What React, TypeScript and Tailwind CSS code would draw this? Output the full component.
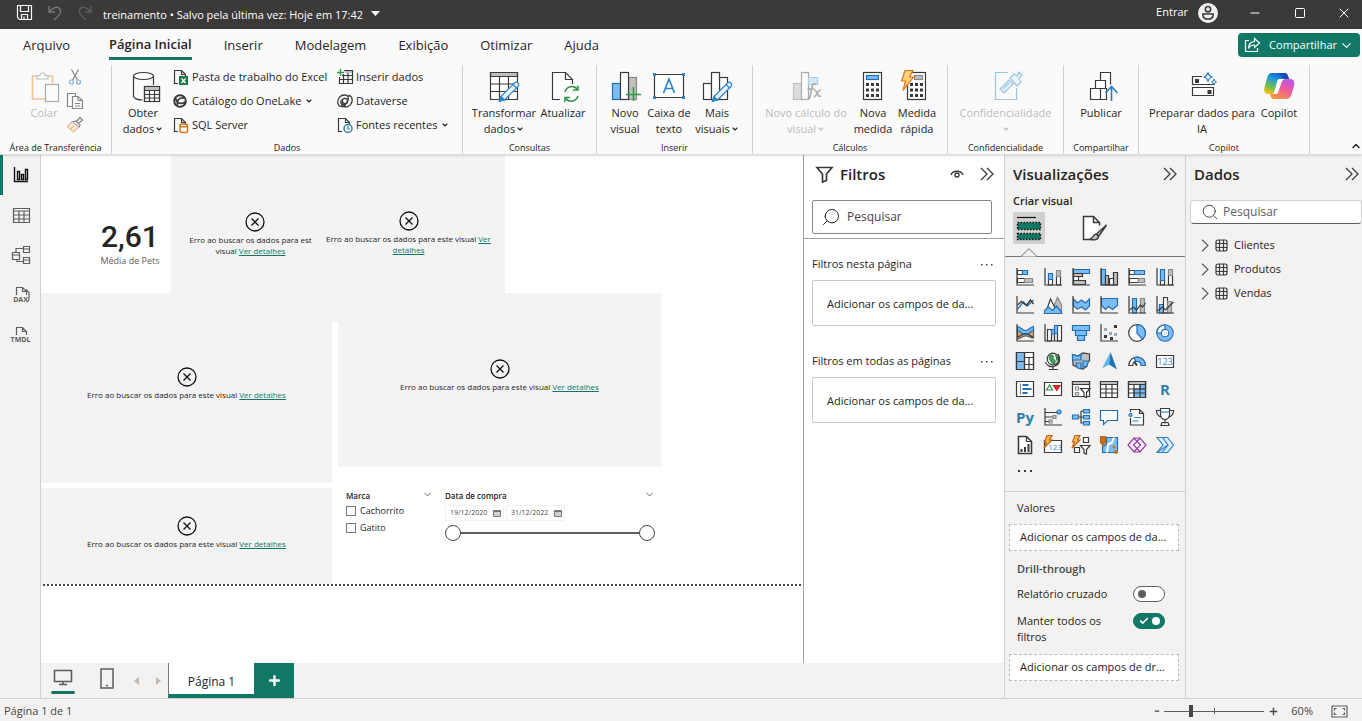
import { type ReactNode, useState } from "react";
import { Check, ChevronDown, ChevronUp, Minus, Plus, Search, Square, X } from "lucide-react";

const INK = "#3b3a39";
const BLUE = "#7cbcf2";
const EDGE = "#1f6fb2";
const GREY = "#c1bfbd";
const PAPER = "#ffffff";

interface IconProps {
  size: number;
  children: ReactNode;
  className?: string;
}

function Icon({ size, children, className }: IconProps) {
  return (
    <svg
      width={size}
      height={size}
      viewBox={`0 0 ${size} ${size}`}
      fill="none"
      stroke={INK}
      strokeWidth={1.2}
      className={`shrink-0 overflow-visible ${className ?? ""}`}
      aria-hidden="true"
    >
      {children}
    </svg>
  );
}

function Caret() {
  return <ChevronDown size={8} strokeWidth={3.5} className="ml-px inline-block shrink-0" />;
}

function DoubleChevron() {
  return (
    <Icon size={14}>
      <path d="m1 1 6 6-6 6M7 1l6 6-6 6" strokeWidth={1.3} />
    </Icon>
  );
}

/* ---------- ribbon icons, 32px ---------- */

const pencil = (
  <g>
    <path d="M13 26.500 26.500 13a2.400 2.400 0 0 1 3.500 3.500L16.500 30 11.500 31.200Z" fill="#e8f4fd" stroke="#2f86c6" />
    <path d="M13 26.500 16.500 30 11.500 31.200Z" fill="#2f86c6" stroke="#2f86c6" />
    <path d="m25 14.500 3.500 3.500" stroke="#2f86c6" />
  </g>
);

const icons = {
  paste: (
    <Icon size={32} className="opacity-50">
      <path d="M9 6H4.500v23H17M19 6h5.500v7" stroke="#e8923a" strokeWidth={1.6} />
      <path d="M9 9V5.500h3a2.500 2.500 0 0 1 5 0h3V9Z" stroke="#8a8886" fill={PAPER} />
      <rect x="17.500" y="14.500" width="13" height="17" stroke="#605e5c" fill={PAPER} />
    </Icon>
  ),
  database: (
    <Icon size={32}>
      <path d="M6.500 6v20c0 2.300 4 4 9 4M26.500 6v9" />
      <ellipse cx="16.500" cy="6" rx="10" ry="3.500" fill={PAPER} />
      <rect x="17.500" y="16.500" width="15" height="15" fill={PAPER} />
      <path d="M17.500 18.500h15" stroke={GREY} strokeWidth={3} />
      <path d="M17.500 20.500h15M17.500 24.500h15M17.500 28h15M22.500 20.500v11M27.500 20.500v11M17.500 16.500h15v15h-15z" />
    </Icon>
  ),
  transform: (
    <Icon size={32}>
      <path d="M2.500 2.500h27v27h-27z" fill={PAPER} />
      <path d="M3 4.500h26" stroke={GREY} strokeWidth={3.500} />
      <path d="M2.500 2.500h27v4h-27zM2.500 14h27M2.500 21.500h27M11.500 6.500v23M20.500 6.500v23" />
      {pencil}
    </Icon>
  ),
  refresh: (
    <Icon size={32}>
      <path d="M13 29.500H5.500v-27h13l7 7V14" fill={PAPER} />
      <path d="M18.500 2.500v7h7" />
      <path d="M18 22a7 7 0 0 1 12.500-2.500M31 26a7 7 0 0 1-12.500 2" stroke="#2f8f4a" strokeWidth={1.500} />
      <path d="M31 15.500v4.500h-5M18 32v-4.500h5" stroke="#2f8f4a" strokeWidth={1.500} />
    </Icon>
  ),
  newVisual: (
    <Icon size={32}>
      <rect x="3.500" y="13.500" width="8" height="16" fill={BLUE} stroke={EDGE} />
      <rect x="19.500" y="7.500" width="8" height="22" fill={GREY} stroke="#8a8886" />
      <rect x="11.500" y="2.500" width="8" height="27" fill={PAPER} />
      <path d="M24.500 17v14M17 24.500h15" stroke="#2f9a4a" strokeWidth={1.600} />
    </Icon>
  ),
  textBox: (
    <Icon size={32}>
      <path d="M1.500 4.500h29v23h-29z" fill={PAPER} />
      <path d="M10.500 23 16 9l5.500 14M12.300 18.500h7.400" stroke="#2f86c6" strokeWidth={1.700} />
      <path d="M0 3h3v3H0zM29 3h3v3h-3zM0 26h3v3H0zM29 26h3v3h-3z" fill="#2f86c6" stroke="none" />
    </Icon>
  ),
  moreVisuals: (
    <Icon size={32}>
      <rect x="2.500" y="13.500" width="8" height="16" fill={PAPER} />
      <rect x="18.500" y="7.500" width="8" height="22" fill={PAPER} />
      <rect x="10.500" y="2.500" width="8" height="27" fill={PAPER} />
      {pencil}
    </Icon>
  ),
  visualCalc: (
    <Icon size={32} className="opacity-50">
      <rect x="3.500" y="13.500" width="8" height="16" fill={GREY} stroke="#8a8886" />
      <rect x="11.500" y="2.500" width="7" height="27" fill={PAPER} stroke="#605e5c" />
      <path d="M18.500 7.500h9v7h-9z" fill="#b5d8f2" stroke="#5fa5d8" />
      <path d="M26 14c-4-2-4 3-5 8s-1 8-4 7M17.500 19h7M24 20c3-1 3 8 7 6M31 20c-3-1-5 7-7 7" stroke="#605e5c" strokeWidth={1.600} />
    </Icon>
  ),
  calculator: (
    <Icon size={32}>
      <rect x="6.500" y="2.500" width="18" height="27" fill={PAPER} />
      <rect x="9.500" y="5.500" width="12" height="4" fill={BLUE} stroke={EDGE} />
      <path d="M9 14.500h13M9 20h13M9 25.500h13" strokeWidth={3} strokeDasharray="3 2" />
    </Icon>
  ),
  quickMeasure: (
    <Icon size={32}>
      <rect x="6.500" y="2.500" width="18" height="27" fill={PAPER} />
      <rect x="13.500" y="5.500" width="8" height="4" fill={GREY} stroke="#8a8886" />
      <path d="M9 14.500h13M9 20h13M9 25.500h13" strokeWidth={3} strokeDasharray="3 2" />
      <path d="M4 .5h8L8.500 7h4L2 20.500 4.500 11H.5z" fill="#ffd27a" stroke="#d9761a" />
    </Icon>
  ),
  sensitivity: (
    <Icon size={32} className="opacity-50">
      <path d="M18 2.500H5.500v27h21V18" stroke="#3f93c9" />
      <path d="m10 19 9-9 4 4-9 9zM13 19l6-6M20 8l4-4 3 2 2-4 3 3-3 3 2 4-4 4z" stroke="#3f93c9" fill="#dcebf5" />
    </Icon>
  ),
  publish: (
    <Icon size={32}>
      <path d="M5.500 29.500v-11h10v11zM10.500 18.500v-8h10v8M15.500 10.500v-8h10v12M15.500 29.500h6v-11h-6" fill={PAPER} />
      <path d="M26.500 31V17M20.500 23l6-6.500 6 6.500" stroke="#2f7fc6" strokeWidth={1.600} />
    </Icon>
  ),
  prepareAi: (
    <Icon size={32}>
      <path d="M16 6.500H6.500v8h21v-2M6.500 17.500h21v8h-21z" fill={PAPER} />
      <path d="M9 9h4v4H9zM21.500 20h4v4h-4z" fill={INK} stroke="none" />
      <path d="M22 2.500q1 4 4.500 4.500-3.500.5-4.500 4.500-1-4-4.500-4.500 3.500-.5 4.500-4.500ZM28 9q.5 2.500 2.500 3-2 .5-2.500 3-.5-2.500-2.500-3 2-.5 2.500-3Z" stroke="#2f7fc6" fill={PAPER} />
    </Icon>
  ),
  copilot: (
    <svg width="32" height="32" viewBox="0 0 32 32" aria-hidden="true">
      <defs>
        <linearGradient id="cpA" x1="0.700" y1="0" x2="0.200" y2="1">
          <stop offset="0" stopColor="#1550c9" />
          <stop offset="0.350" stopColor="#1c9bd8" />
          <stop offset="0.700" stopColor="#6fc04f" />
          <stop offset="1" stopColor="#f2c30c" />
        </linearGradient>
        <linearGradient id="cpB" x1="0.800" y1="0" x2="0.200" y2="1">
          <stop offset="0" stopColor="#b657e8" />
          <stop offset="0.450" stopColor="#ee5a9c" />
          <stop offset="1" stopColor="#ff9a3d" />
        </linearGradient>
      </defs>
      <path d="M9 3h12c3 0 3.500 1.500 4.300 4l.7 2h-4c-3 0-4 1.500-5 4.500L14.500 21c-1 2.500-2 3-4.500 3H5.500C1.500 24 .5 21 1.500 17L4 8c1-3.500 2.500-5 5-5Z" fill="url(#cpA)" />
      <path d="M23 29H11.500C8.500 29 8 27.500 7 24h4c2.500 0 3.500-1.500 4.500-4.500l2.500-7c1-2.500 2-3.500 4.500-3.500h4.500c4 0 5 3 4 7l-2.500 8.500C27.500 27.800 25.500 29 23 29Z" fill="url(#cpB)" />
      <path d="M17 3h4c3 0 3.500 1.500 4.300 4l.7 2h-4.500c-2-.3-2.500-1-3-3Z" fill="#1a49b8" />
      <path d="m14.500 10-3 11c-.4 1.500-1 2.500-2 3h3c2 0 2.500-1 3.500-4l2.500-7.500c.7-2 1.500-3 3-3.500h-4c-1.500 0-2.500 0-3 1Z" fill="#fff" />
    </svg>
  ),
};

/* ---------- ribbon icons, 16px ---------- */

const fileEdge = <path d="M5 14.500H1.500v-13h7l4 4V8M8.500 1.500v4h4" fill="none" />;

const small = {
  cut: (
    <Icon size={16} className="opacity-60">
      <path d="M4.500.5 10.500 11M11.500.5l-6 10.500" />
      <circle cx="4.500" cy="13" r="2" stroke="#2f86c6" />
      <circle cx="11.500" cy="13" r="2" stroke="#2f86c6" />
    </Icon>
  ),
  copy: (
    <Icon size={16} className="opacity-60">
      <path d="M5 13.500H.5V.5h8v3M5.500 3.500H11l4.500 4v8h-10zM11 3.500v4h4.500M8 10.500h5M8 13h5" />
    </Icon>
  ),
  brush: (
    <Icon size={16} className="opacity-60">
      <path d="m13 .5 2.500 2.500-4 3.500-2-2zM5 5l4-1 4 4-1 2z" />
      <path d="M5 5 .5 9.500 6.500 15l5-5M3.500 12l3-3" stroke="#e8923a" fill="#fbe6cf" />
    </Icon>
  ),
  excel: (
    <Icon size={16}>
      {fileEdge}
      <rect x="6" y="7" width="9" height="9" fill="#1d7a45" stroke="none" />
      <path d="m8.500 9.500 4 4.500M12.500 9.500l-4 4.500" stroke="#fff" strokeWidth={1.400} />
    </Icon>
  ),
  oneLake: (
    <Icon size={16}>
      <circle cx="7" cy="8" r="5.800" strokeWidth={2} />
      <path d="M2.500 5c1 5 5 7 10 4M4.500 12c-1-5 2-8 7-7" strokeWidth={1.700} />
    </Icon>
  ),
  sql: (
    <Icon size={16}>
      {fileEdge}
      <path d="M7 8.500v5.700c0 .8 1.700 1.300 3.800 1.300s3.700-.5 3.700-1.300V8.500" stroke="#d9761a" strokeWidth={1.500} fill="#fff" />
      <ellipse cx="10.750" cy="8.500" rx="3.750" ry="1.500" stroke="#d9761a" strokeWidth={1.500} fill="#fff" />
    </Icon>
  ),
  enterData: (
    <Icon size={16}>
      <path d="M7 1.500h8.500v13h-13V8M2.500 10.500h13M5 6.500h10.500M6.500 5v9.500M11 2v12.500" />
      <path d="M8 3h7" stroke={GREY} strokeWidth={2} />
      <path d="M3.500 0v7M0 3.500h7" stroke="#2f9a4a" strokeWidth={1.400} />
    </Icon>
  ),
  dataverse: (
    <Icon size={16}>
      <circle cx="8" cy="8" r="2.600" />
      <path d="M10.500 8c1.800-3.500.5-6-3-6C3.500 2 .8 5.500.8 9c0 3 1.700 4.500 4 4.500 1.700 0 3-.7 4-2M5.500 8c-1.800 3.500-.5 6 3 6 4 0 6.700-3.500 6.700-7 0-3-1.700-4.500-4-4.500" strokeWidth={1.300} />
      <path d="M10.500 8c-.5 2-2 3.500-4.500 3.500S3 9 4.500 6.500" />
    </Icon>
  ),
  recent: (
    <Icon size={16}>
      {fileEdge}
      <circle cx="11" cy="11.500" r="4" stroke="#2f7fa6" strokeWidth={1.500} fill="#fff" />
      <path d="M11 9v3h2" stroke="#2f7fa6" />
    </Icon>
  ),
};

interface BigButtonProps {
  icon: ReactNode;
  lines: string[];
  caret?: boolean;
  disabled?: boolean;
  className?: string;
}

function BigButton({ icon, lines, caret, disabled, className }: BigButtonProps) {
  return (
    <button
      type="button"
      disabled={disabled}
      className={`flex flex-col items-center pt-[5px] text-[11px] leading-4 whitespace-nowrap disabled:text-[#bdbbb9] ${className ?? ""}`}
    >
      {icon}
      <span className="mt-[3px]">{lines[0]}</span>
      <span className="flex h-4 items-center">
        {lines[1]}
        {caret && <Caret />}
      </span>
    </button>
  );
}

interface SmallButtonProps {
  icon: ReactNode;
  label: string;
  caret?: boolean;
}

function SmallButton({ icon, label, caret }: SmallButtonProps) {
  return (
    <button type="button" className="flex h-6 items-center gap-[3px] text-[11px] whitespace-nowrap">
      {icon}
      {label}
      {caret && <Caret />}
    </button>
  );
}

interface GroupProps {
  label: string;
  className: string;
  children: ReactNode;
}

function Group({ label, className, children }: GroupProps) {
  return (
    <section
      aria-label={label}
      className={`flex shrink-0 flex-col border-r border-[#d2d0ce] ${className}`}
    >
      <div className="flex h-[73px]">{children}</div>
      <div className="mt-1 text-center text-[9px] leading-3">{label}</div>
    </section>
  );
}

function TitleBar() {
  return (
    <header className="flex h-[29px] shrink-0 items-center bg-[#3b3a39] pl-4 text-[11px] text-white">
      <button type="button" aria-label="Salvar" className="mr-3.5 mb-1">
        <Icon size={17} className="[&_*]:stroke-white">
          <path d="M1.500 1.500h14v14h-12l-2-2zM4.500 1.500v6h8v-6M5.500 15.500v-5h6v5M8 12.500v3" />
        </Icon>
      </button>
      <button type="button" aria-label="Desfazer" className="mr-3.5 mb-1">
        <Icon size={16} className="[&_*]:stroke-[#797775]">
          <path d="M2 1v6h6M2 7C6 2 11 1 13 4s-1 7-6 11" strokeWidth={1.400} />
        </Icon>
      </button>
      <button type="button" aria-label="Refazer" className="mr-2.5 mb-1">
        <Icon size={16} className="[&_*]:stroke-[#605e5c]">
          <path d="M14 1v6H8M14 7C10 2 5 1 3 4s1 7 6 11" strokeWidth={1.400} />
        </Icon>
      </button>
      <button type="button" className="flex items-center gap-2 pt-0.5 whitespace-nowrap">
        treinamento • Salvo pela última vez: Hoje em 17:42
        <svg width="9" height="5" viewBox="0 0 9 5" fill="currentColor" className="mb-1" aria-hidden="true">
          <path d="M0 0h9L4.500 5z" />
        </svg>
      </button>
      <div className="mb-1 ml-auto flex items-center">
        <button type="button" className="flex items-center gap-2.5">
          Entrar
          <svg width="20" height="20" viewBox="0 0 20 20" aria-hidden="true">
            <circle cx="10" cy="10" r="10" fill="#f3f2f1" />
            <circle cx="10" cy="6.200" r="2.700" fill="none" stroke="#3b3a39" strokeWidth="1.600" />
            <path d="M4.800 11h10.400c0 3.500-2 5.200-5.200 5.200S4.800 14.500 4.800 11Z" fill="none" stroke="#3b3a39" strokeWidth="1.600" />
          </svg>
        </button>
        <div className="ml-7 flex gap-7 pr-2.5">
          <button type="button" aria-label="Minimizar" className="px-0.5">
            <Minus size={14} strokeWidth={1.800} />
          </button>
          <button type="button" aria-label="Maximizar" className="px-0.5">
            <Square size={12} strokeWidth={2} />
          </button>
          <button type="button" aria-label="Fechar">
            <X size={16} strokeWidth={1.500} />
          </button>
        </div>
      </div>
    </header>
  );
}

const tabs = ["Arquivo", "Página Inicial", "Inserir", "Modelagem", "Exibição", "Otimizar", "Ajuda"];

function Ribbon() {
  return (
    <div className="relative z-10 shrink-0 border-b border-[#e1dfdd] bg-[#fafafa] shadow-sm">
      <div className="flex h-9 items-start pr-0.5 pl-[23px]">
        <nav className="flex h-8 items-center gap-8 text-[13px]">
          {tabs.map((tab) => (
            <button
              key={tab}
              type="button"
              className={
                tab === "Página Inicial"
                  ? "ml-[7px] border-b-3 border-[#117865] pt-1 pb-[3px] leading-5 font-semibold"
                  : "leading-5"
              }
            >
              {tab}
            </button>
          ))}
        </nav>
        <button
          type="button"
          className="mt-1 ml-auto flex h-6 items-center rounded bg-[#117865] pr-1.5 pl-1.5 text-[11px] font-medium text-white"
        >
          <Icon size={17} className="mr-2 [&_*]:stroke-white">
            <path d="M5 3.500H1.500v11h12V11M10.500 1.500l5 4.500-5 4.500V8C7 8 5.500 9 4.500 11.500 4.500 7 7 4.500 10.500 4.500z" />
          </Icon>
          Compartilhar
          <ChevronDown size={15} strokeWidth={1.700} className="ml-0.5" />
        </button>
      </div>
      <div className="flex h-[89px]">
        <Group label="Área de Transferência" className="w-[112px]">
          <BigButton icon={icons.paste} lines={["Colar"]} disabled className="ml-6 w-10" />
          <div className="ml-[3px] flex flex-col">
            <button type="button" aria-label="Recortar" className="h-6">{small.cut}</button>
            <button type="button" aria-label="Copiar" className="h-6">{small.copy}</button>
            <button type="button" aria-label="Pincel de Formatação" className="h-6">{small.brush}</button>
          </div>
        </Group>
        <Group label="Dados" className="w-[351px]">
          <BigButton icon={icons.database} lines={["Obter", "dados"]} caret className="ml-1.5 w-[50px]" />
          <div className="ml-[5px] flex w-[164px] flex-col">
            <SmallButton icon={small.excel} label="Pasta de trabalho do Excel" />
            <SmallButton icon={small.oneLake} label="Catálogo do OneLake" caret />
            <SmallButton icon={small.sql} label="SQL Server" />
          </div>
          <div className="flex flex-col">
            <SmallButton icon={small.enterData} label="Inserir dados" />
            <SmallButton icon={small.dataverse} label="Dataverse" />
            <SmallButton icon={small.recent} label="Fontes recentes" caret />
          </div>
        </Group>
        <Group label="Consultas" className="w-[134px]">
          <BigButton icon={icons.transform} lines={["Transformar", "dados"]} caret className="ml-1.5 w-[70px]" />
          <BigButton icon={icons.refresh} lines={["Atualizar"]} className="w-12" />
        </Group>
        <Group label="Inserir" className="w-[156px]">
          <BigButton icon={icons.newVisual} lines={["Novo", "visual"]} className="ml-2 w-10" />
          <BigButton icon={icons.textBox} lines={["Caixa de", "texto"]} className="w-12" />
          <BigButton icon={icons.moreVisuals} lines={["Mais", "visuais"]} caret className="w-12" />
        </Group>
        <Group label="Cálculos" className="w-[195px]">
          <BigButton icon={icons.visualCalc} lines={["Novo cálculo do", "visual"]} caret disabled className="ml-[9px] w-[88px]" />
          <BigButton icon={icons.calculator} lines={["Nova", "medida"]} className="w-[46px]" />
          <BigButton icon={icons.quickMeasure} lines={["Medida", "rápida"]} className="w-[42px]" />
        </Group>
        <Group label="Confidencialidade" className="w-[116px]">
          <BigButton icon={icons.sensitivity} lines={["Confidencialidade"]} caret disabled className="w-full" />
        </Group>
        <Group label="Compartilhar" className="w-[75px]">
          <BigButton icon={icons.publish} lines={["Publicar"]} className="w-full" />
        </Group>
        <Group label="Copilot" className="w-[171px]">
          <BigButton icon={icons.prepareAi} lines={["Preparar dados para", "IA"]} className="ml-2 w-[110px]" />
          <BigButton icon={icons.copilot} lines={["Copilot"]} className="w-11" />
        </Group>
        <button type="button" aria-label="Recolher faixa de opções" className="mt-auto mb-0.5 ml-auto">
          <ChevronUp size={12} strokeWidth={3} />
        </button>
      </div>
    </div>
  );
}

const railViews = [
  {
    label: "Exibição de relatório",
    icon: <path d="M2.500 1v14.500H16M5.500 13.500v-8h2v8zM9.500 13.500v-5h2v5zM13.500 13.500v-10h2v10z" stroke="#111" strokeWidth={1.400} />,
  },
  {
    label: "Exibição de tabela",
    icon: <path d="M1.500 2.500h16v14h-16zM1.500 5h16M1.500 9h16M1.500 13h16M7 5v11.500M12 5v11.500" stroke="#605e5c" />,
  },
  {
    label: "Exibição de modelo",
    icon: <path d="M.5 6.500h7v7h-7zM.5 9h7M11.500.5h6v6h-6zM11.500 3h6M11.500 11.500h6v6h-6zM11.500 14h6M4 6.500v-4h7.500M5 13.500v2h6.500" stroke="#605e5c" />,
  },
  { label: "DAX", tag: "DAX", icon: <path d="M4.500 9V1.500h6l4 4V9M10.500 1.500v4h4M14 3.500l3 3V13q0 2-2 3" stroke="#605e5c" /> },
  { label: "TMDL", tag: "TMDL", icon: <path d="M4.500 9V1.500h6l4 4V9M10.500 1.500v4h4" stroke="#605e5c" /> },
];

function Rail() {
  return (
    <nav className="flex w-[41px] shrink-0 flex-col border-r border-[#d2d0ce] bg-[#f3f2f1]">
      {railViews.map((view, i) => (
        <button
          key={view.label}
          type="button"
          aria-label={view.label}
          className={`relative flex h-10 items-center justify-center border-l-3 pr-0.5 ${i === 0 ? "border-[#117865]" : "border-transparent"}`}
        >
          <Icon size={18}>{view.icon}</Icon>
          {view.tag && (
            <span className="absolute bottom-[11px] left-1/2 -translate-x-1/2 pr-0.5 text-[7px] leading-2 font-bold text-[#605e5c]">
              {view.tag}
            </span>
          )}
        </button>
      ))}
    </nav>
  );
}

interface VisualErrorProps {
  className: string;
  textClass?: string;
  children?: ReactNode;
}

function VisualError({ className, textClass, children }: VisualErrorProps) {
  return (
    <div className={`absolute flex flex-col items-center bg-[#f3f3f3] text-[8px] leading-[11px] text-[#252423] ${className}`}>
      <Icon size={20} className="mb-0.5">
        <circle cx="10" cy="10" r="9" stroke="#111" strokeWidth={1.300} />
        <path d="m6.500 6.500 7 7M13.500 6.500l-7 7" stroke="#111" strokeWidth={1.300} />
      </Icon>
      <p className={`text-center ${textClass ?? "whitespace-nowrap"}`}>
        {children ?? "Erro ao buscar os dados para este visual"}{" "}
        <a href="#detalhes" className="text-[#117865] underline">
          Ver detalhes
        </a>
      </p>
    </div>
  );
}

function DateField({ label, value }: { label: string; value: string }) {
  return (
    <label className="flex h-4 items-center gap-[5px] border border-[#f3f2f1] pr-0.5 pl-1">
      <input
        type="text"
        aria-label={label}
        defaultValue={value}
        className="w-[38px] bg-transparent text-[7px] text-[#484644] outline-none"
      />
      <Icon size={8}>
        <path d="M.5 1.500h7v6h-7zM.5 2.500h7" stroke="#605e5c" strokeWidth={0.800} fill="#d2d0ce" />
      </Icon>
    </label>
  );
}

const rangeClass =
  "pointer-events-none absolute inset-0 w-full appearance-none bg-transparent [&::-webkit-slider-thumb]:pointer-events-auto [&::-webkit-slider-thumb]:size-4 [&::-webkit-slider-thumb]:appearance-none [&::-webkit-slider-thumb]:rounded-full [&::-webkit-slider-thumb]:border-[1px] [&::-webkit-slider-thumb]:border-[#484644] [&::-webkit-slider-thumb]:bg-white";

function ReportCanvas() {
  return (
    <main className="relative min-w-0 flex-1 overflow-hidden bg-white">
      <div className="absolute top-[66px] left-[55px] flex w-[68px] flex-col items-center">
        <span className="font-[Roboto] text-[30px] leading-8 font-medium text-[#252423]">2,61</span>
        <span className="text-[9px] leading-4 whitespace-nowrap text-[#605e5c]">Média de Pets</span>
      </div>

      {/* the second visual lies over the right edge of the first */}
      <VisualError className="top-0 left-[130px] h-[138px] w-[167px] pt-[57px]" textClass="pr-2 whitespace-nowrap">
        Erro ao buscar os dados para est
        <br />
        visual
      </VisualError>
      <VisualError className="top-0 left-[271px] h-[138px] w-[193px] pt-14" textClass="w-[168px]" />
      <VisualError className="top-[138px] left-0 h-[190px] w-[291px] pt-[74px]" />
      <VisualError className="top-[138px] left-[297px] h-[174px] w-[323px] pt-[66px]" />
      <div className="absolute top-[138px] left-[291px] h-[29px] w-1.5 bg-[#f3f3f3]" />
      <VisualError className="top-[333px] left-0 h-24 w-[291px] pt-7" />

      {/* Marca slicer */}
      <fieldset className="absolute top-[335px] left-[305px] w-[86px]">
        <div className="flex h-3 items-center justify-between text-[8px] font-semibold">
          Marca
          <ChevronDown size={11} strokeWidth={1.500} className="mb-1 -mr-px" />
        </div>
        {["Cachorrito", "Gatito"].map((name) => (
          <label key={name} className="flex h-[17px] items-center gap-1 text-[9px]">
            <input type="checkbox" className="size-2.5 appearance-none border border-[#797775] bg-white" />
            {name}
          </label>
        ))}
      </fieldset>

      {/* Data de compra slicer */}
      <fieldset className="absolute top-[335px] left-[404px] w-[210px]">
        <div className="flex h-3 items-center justify-between text-[8px] font-semibold">
          Data de compra
          <ChevronDown size={11} strokeWidth={1.500} className="mb-1" />
        </div>
        <div className="mt-[3px] flex gap-0.5">
          <DateField label="Data inicial" value="19/12/2020" />
          <DateField label="Data final" value="31/12/2022" />
        </div>
        <div className="relative mt-1 flex h-4 items-center">
          <div className="mx-2 h-0.5 flex-1 bg-[#605e5c]" />
          <input type="range" aria-label="Início do intervalo" defaultValue={0} className={rangeClass} />
          <input type="range" aria-label="Fim do intervalo" defaultValue={100} className={rangeClass} />
        </div>
      </fieldset>

      <div className="absolute top-[429px] right-0 left-0.5 h-0.5 bg-[repeating-linear-gradient(90deg,#484644_0_2px,transparent_2px_4px)]" />
    </main>
  );
}

function FilterSection({ title }: { title: string }) {
  return (
    <section className="mb-[27px] pr-2 pl-2 text-[11px]">
      <div className="flex h-4 items-center justify-between pr-0.5">
        <h3>{title}</h3>
        <button type="button" aria-label={`Mais opções: ${title}`}>
          <Dots />
        </button>
      </div>
      <div className="mt-2 flex h-[46px] items-center rounded-xs border border-[#c8c6c4] pt-0.5 pl-3.5 whitespace-nowrap">
        Adicionar os campos de da...
      </div>
    </section>
  );
}

function Dots() {
  return (
    <svg width="14" height="3" viewBox="0 0 14 3" fill={INK} aria-hidden="true">
      <path d="M1 1h1.500v1.500H1zM6 1h1.500v1.500H6zM11 1h1.500v1.500H11z" />
    </svg>
  );
}

function FiltersPane() {
  return (
    <aside className="flex w-[201px] shrink-0 flex-col border-l border-[#a19f9d] bg-white">
      <div className="flex h-[38px] items-center pr-2.5 pl-3">
        <Icon size={17} className="mr-[7px]">
          <path d="M1 1.500h15L10.500 8v6.500l-4 1.500V8z" strokeWidth={1.700} />
        </Icon>
        <h2 className="text-[15px] font-semibold">Filtros</h2>
        <button type="button" aria-label="Mostrar painel" className="ml-auto">
          <Icon size={14}>
            <path d="M1 8c1.500-5 10.500-5 12 0" strokeWidth={1.400} />
            <circle cx="7" cy="8" r="2" strokeWidth={1.400} />
          </Icon>
        </button>
        <button type="button" aria-label="Recolher filtros" className="ml-4">
          <DoubleChevron />
        </button>
      </div>
      <div className="border-b border-[#a19f9d] pt-[7px] pr-3 pb-1 pl-2">
        <label className="flex h-[34px] items-center gap-1.5 rounded-xs border border-[#8a8886] pl-2">
          <Search size={20} strokeWidth={1.200} className="shrink-0 -scale-x-100" />
          <input
            type="search"
            aria-label="Pesquisar filtros"
            placeholder="Pesquisar"
            className="w-full min-w-0 bg-transparent text-[12px] outline-none placeholder:text-[#484644]"
          />
        </label>
      </div>
      <div className="pt-[17px]">
        <FilterSection title="Filtros nesta página" />
        <FilterSection title="Filtros em todas as páginas" />
      </div>
    </aside>
  );
}

function PageTabs() {
  return (
    <div className="flex h-[35px] shrink-0 bg-[#f3f2f1]">
      <button type="button" aria-label="Layout da área de trabalho" className="ml-2.5 flex w-6 flex-col items-center justify-between pt-1.5 pb-1">
        <Icon size={20} className="-mb-1">
          <path d="M1.500 1.500h17v11h-17zM10 12.500v3M6 15.500h8" stroke="#605e5c" strokeWidth={1.600} />
        </Icon>
        <span className="h-[3px] w-6 shrink-0 rounded-full bg-[#117865]" />
      </button>
      <button type="button" aria-label="Layout para dispositivo móvel" className="ml-[25px] flex pt-[5px]">
        <svg width="14" height="21" viewBox="0 0 14 21" fill="none" stroke="#605e5c" strokeWidth="1.500" aria-hidden="true">
          <path d="M1 1h12v19H1zM6 17.500h2" />
        </svg>
      </button>
      <div className="ml-5 flex w-[34px] items-center justify-between pr-[7px] text-[#bebbb8]">
        <button type="button" aria-label="Página anterior">
          <svg width="5" height="8" viewBox="0 0 5 8" fill="currentColor" aria-hidden="true"><path d="M5 0v8L0 4z" /></svg>
        </button>
        <button type="button" aria-label="Próxima página">
          <svg width="5" height="8" viewBox="0 0 5 8" fill="currentColor" aria-hidden="true"><path d="M0 0v8l5-4z" /></svg>
        </button>
      </div>
      <button
        type="button"
        className="h-full w-[86px] border-b-4 border-l border-b-[#117865] border-l-[#797775] bg-white pt-1.5 text-[12px] font-medium"
      >
        Página 1
      </button>
      <button type="button" aria-label="Nova página" className="flex w-10 items-center justify-center bg-[#117865] text-white">
        <Plus size={15} strokeWidth={4} />
      </button>
    </div>
  );
}

/* ---------- visual gallery, 18px ---------- */

const axes = <path d="M1 0v17h17" />;

interface Visual {
  name: string;
  art?: ReactNode;
  letters?: string;
}

const visuals: Visual[] = [
  { name: "Gráfico de barras empilhadas", art: <><path d="M1.500 2.500h5v4h-5zM1.500 10.500h7v4h-7z" fill={PAPER} /><path d="M6.500 2.500h5v4h-5z" fill={BLUE} stroke={EDGE} /><path d="M8.500 10.500h8v4h-8z" fill={GREY} stroke="#8a8886" />{axes}</> },
  { name: "Gráfico de colunas empilhadas", art: <><path d="M4.500 11.500h4V17h-4zM12.500 8.500h4V17h-4z" fill={PAPER} /><path d="M4.500 5.500h4v6h-4z" fill={BLUE} stroke={EDGE} /><path d="M12.500 2.500h4v6h-4z" fill={GREY} stroke="#8a8886" />{axes}</> },
  { name: "Gráfico de barras clusterizado", art: <><path d="M1.500 1.500h16v4h-16z" fill={BLUE} stroke={EDGE} /><path d="M1.500 5.500h9v3h-9zM1.500 12.500h12v4h-12z" fill={GREY} /><path d="M1.500 8.500h5v4h-5z" fill={PAPER} />{axes}</> },
  { name: "Gráfico de colunas clusterizado", art: <><path d="M1.500 1.500h4V17h-4z" fill={BLUE} stroke={EDGE} /><path d="M5.500 7.500h3V17h-3zM13.500 4.500h4V17h-4z" fill={GREY} /><path d="M9.500 10.500h4V17h-4z" fill={PAPER} />{axes}</> },
  { name: "Gráfico de barras 100% empilhadas", art: <><path d="M1.500 2.500h5v4h-5zM1.500 10.500h9v4h-9z" fill={PAPER} /><path d="M6.500 2.500h10v4h-10z" fill={BLUE} stroke={EDGE} /><path d="M10.500 10.500h6v4h-6z" fill={GREY} stroke="#8a8886" />{axes}</> },
  { name: "Gráfico de colunas 100% empilhadas", art: <><path d="M4.500 12.500h4V17h-4zM12.500 7.500h4V17h-4z" fill={PAPER} /><path d="M4.500 1.500h4v11h-4z" fill={BLUE} stroke={EDGE} /><path d="M12.500 1.500h4v6h-4z" fill={GREY} stroke="#8a8886" />{axes}</> },

  { name: "Gráfico de linhas", art: <><path d="m1.500 13 6-7 4 4 6-6" stroke="#2f7fc6" strokeWidth={1.400} /><path d="m1.500 9 4-3.500 5 4 4-5.500 3 4" strokeWidth={1.400} />{axes}</> },
  { name: "Gráfico de áreas", art: <><path d="m7 17 6.500-15.500L17.500 9v8z" fill={GREY} stroke="#8a8886" /><path d="m1.500 17 5-14 7 14z" fill={PAPER} /><path d="m.5 14.500 4-3.500 4 3.500 4-4.500 5 6v1.500H.5z" fill={BLUE} stroke={EDGE} /></> },
  { name: "Gráfico de áreas empilhadas", art: <><path d="m1.500 3 4 4 4-3 4 3 4-4v7l-4 4-4-3-4 2-4-3z" fill={BLUE} stroke={EDGE} />{axes}</> },
  { name: "Gráfico de áreas 100% empilhadas", art: <><path d="M1.500 2.500h16v7l-5 4-4-3-3 3-4-4z" fill={BLUE} stroke={EDGE} />{axes}</> },
  { name: "Gráfico de linhas e colunas empilhadas", art: <><path d="M4.500 2.500h4V17h-4z" fill={BLUE} stroke={EDGE} /><path d="M12.500 2.500h4V17h-4z" fill={GREY} stroke="#8a8886" /><path d="m1.500 14 4-3 3 3 4-5 2 2 3-4" />{axes}</> },
  { name: "Gráfico de linhas e colunas clusterizadas", art: <><path d="M3.500 8.500h4V17h-4z" fill={BLUE} stroke={EDGE} /><path d="M7.500 1.500h4V17h-4z" fill={PAPER} /><path d="M11.500 5.500h4V17h-4z" fill={GREY} stroke="#8a8886" /><path d="m1.500 15 5-4 3 3 4-4 4 -4" />{axes}</> },

  { name: "Gráfico de faixas", art: <><path d="M1.500 5c3 0 4 5 8 5s5-5 8-5v9c-3 0-4-2-8-2s-5 3-8 3z" fill="#d8a36a" stroke="#605e5c" /><path d="M1.500 2.500c3 0 4 4 8 4s5-4 8-4v4c-3 0-4 4.500-8 4.500s-5-4.500-8-4.500z" fill={BLUE} stroke={EDGE} /><path d="M1.500 13c3 0 4-3.500 8-3.500s5 3.500 8 3.500" />{axes}</> },
  { name: "Gráfico de cascata", art: <><path d="M3.500 5.500h4V17h-4zM13.500 1.500h4V17h-4z" fill={PAPER} /><path d="M7.500 5.500h3V10h-3zM10.500 1.500h3v8h-3z" fill={BLUE} stroke={EDGE} /><path d="M10.500 10v7" />{axes}</> },
  { name: "Funil", art: <><path d="M.5 1.500h17v5H.5zM3.500 6.500h11v5h-11zM5.500 11.500h7v5h-7z" fill={BLUE} stroke={EDGE} /></> },
  { name: "Gráfico de dispersão", art: <><path d="M4 11h3v3H4zM14 1h3v3h-3zM10 13h3v3h-3z" fill={INK} stroke="none" /><path d="M4 4h3v3H4zM9 8h3v3H9zM14 9h3v3h-3z" fill="#9aa7b5" stroke="none" />{axes}</> },
  { name: "Gráfico de pizza", art: <><circle cx="9" cy="9" r="8.300" fill={PAPER} /><path d="M9 .7v8.300l5.500 6.200A8.300 8.300 0 0 0 9 .7Z" fill={BLUE} stroke={EDGE} /></> },
  { name: "Gráfico de rosca", art: <><circle cx="9" cy="9" r="6" stroke={EDGE} strokeWidth={5.500} /><circle cx="9" cy="9" r="6" stroke={BLUE} strokeWidth={3.500} /><path d="M9 .8A8.200 8.200 0 0 0 .8 9h4.500A3.700 3.700 0 0 1 9 5.300z" fill={PAPER} stroke={EDGE} /></> },

  { name: "Treemap", art: <><path d="M.5.5h17v17H.5z" fill={PAPER} /><path d="M.5.5h8v17h-8z" fill={BLUE} stroke={EDGE} /><path d="M.5.5h17v17H.5zM.5 9.500h8M8.500.5v17M8.500 5.500h9M8.500 12.500h9M13 5.500v12" /></> },
  { name: "Mapa", art: <><circle cx="9" cy="7" r="5.800" fill="#eef7ef" /><path d="M6 4c2-2 4 0 3 2s3 1 2 4-3 1-4-1-3-2-1-5ZM12 4l2 2-1 2z" fill="#4ea864" stroke="#2f7d44" /><path d="M14 2c3 4 2 10-3 12S2 13 1.500 10M9 15v2M5 17.500h9" /></> },
  { name: "Mapa coroplético", art: <><path d="M.5 2.500 6 4l5-3 6.500 1v7c-1 0-2 2-2.500 5l-4 3-4-1L1 13z" fill={GREY} /><path d="m.5 2.500 5.500 1.500 3-1.500V8H.5zM11 9h6.500c-1 0-2 2-2.500 5l-4 1zM4 11h5v6l-4-1.500z" fill={BLUE} stroke={EDGE} /></> },
  { name: "Azure Map", art: <><path d="M10.500 0 2 16.500l7-4z" fill="#5db4e8" stroke="none" /><path d="M10.500 0 17 17.500 9 12.500z" fill="#2273b4" stroke="none" /></> },
  { name: "Medidor", art: <><path d="M.7 13.500a8.300 8.300 0 0 1 16.600 0h-4a4.300 4.300 0 0 0-8.600 0z" fill={PAPER} /><path d="M6 5.700a8.300 8.300 0 0 1 11.300 7.800h-4a4.300 4.300 0 0 0-5.600-4z" fill={BLUE} stroke={EDGE} /><path d="m9 13.500-3-4" strokeWidth={2} /></> },
  { name: "Cartão", art: <><path d="M.5 3.500h17v12H.5z" fill={PAPER} /><text x="9" y="13" textAnchor="middle" fontSize="9" fill="#2f86c6" stroke="none">123</text></> },

  { name: "Cartão de linha múltipla", art: <><path d="M.5 1.500h17v15H.5z" fill={PAPER} /><path d="M4.500 3.500v11" stroke="#8a8886" /><path d="M6.500 5h6M6.500 9h9M6.500 13h5" stroke={EDGE} strokeWidth={2} /></> },
  { name: "KPI", art: <><path d="M.5 2.500h17v13H.5z" fill={PAPER} /><path d="m2.500 10 3-5 3 5z" stroke="#2f8f4a" /><path d="M9.500 5.500h6.500l-3.200 5z" fill="#d33" stroke="#c22" /></> },
  { name: "Segmentação de Dados", art: <><path d="M.5 1.500h17v15H.5z" fill={PAPER} /><path d="M.5 1.500h17v3H.5z" fill={GREY} /><path d="M3.500 7h3v3h-3zM3.500 12.500h3v2.500h-3z" stroke="#8a8886" /><path d="M8.500 8.500h9.500l-3.500 4v5l-2.500-1v-4z" fill={PAPER} /></> },
  { name: "Tabela", art: <><path d="M.5 1.500h17v16H.5z" fill={PAPER} /><path d="M.5 1.500h17v3H.5z" fill={GREY} /><path d="M.5 9h17M.5 13h17M6 4.500v13M12 4.500v13" /></> },
  { name: "Matriz", art: <><path d="M.5 1.500h17v16H.5z" fill={PAPER} /><path d="M6 9h11.500v8.500H6zM12 4.500h5.500V9H12z" fill={BLUE} stroke={EDGE} /><path d="M.5 1.500h17v3H.5z" fill={GREY} /><path d="M.5 9h17M.5 13h17M6 4.500v13M12 4.500v13M.5 1.500h17v16H.5z" /></> },
  { name: "Visual de script R", letters: "R" },

  { name: "Visual do Python", letters: "Py" },
  { name: "Principais influenciadores", art: <><path d="M1 4.500h12M1 9h8M1 13.500h4" /><circle cx="15" cy="4" r="2" fill={BLUE} stroke={EDGE} /><path d="M9 7.500h3v3H9zM5 12h3v3H5z" fill={GREY} stroke="#8a8886" />{axes}</> },
  { name: "Árvore hierárquica", art: <><path d="M6 9h6M9 3v12h3M9 3h3" /><path d="M.5 7h6v4h-6zM11.500 1.500h6V5h-6zM11.500 7.500h6V11h-6zM11.500 13.500h6V17h-6z" fill={BLUE} stroke={EDGE} /></> },
  { name: "P e R", art: <path d="M.5 2.500h17v10H7.500l-4 4v-4h-3z" fill={PAPER} stroke={EDGE} /> },
  { name: "Narrativa inteligente", art: <><path d="M2.500 4V1.500h9l4 4v11.500h-13V10M11.500 1.500v4h4" fill={PAPER} /><path d="M6 9.500h7M4.500 13h6" stroke="#2f86c6" /><circle cx="2.500" cy="7" r="1.500" fill={BLUE} stroke={EDGE} /></> },
  { name: "Metas", art: <><path d="M4.500.5h9v6c0 3-2 5-4.500 5s-4.500-2-4.500-5z" fill={PAPER} /><path d="M4.500 2.500h-4c0 4 2 6 5 6.500M13.500 2.500h4c0 4-2 6-5 6.500M9 11.500v4M5 17.500l1-3h6l1 3z" /><path d="M4.500 4h9" stroke="#2f86c6" /></> },

  { name: "Relatório paginado", art: <><path d="M2.500.5h8l5 5v12h-13z" fill={PAPER} strokeWidth={1.600} /><path d="M10.500.5v5h5" /><path d="M5.500 16v-3M9 16v-5M12.500 16V8" strokeWidth={2} /></> },
  { name: "Cartão (novo)", art: <><path d="M.5 4.500h17v12H.5z" fill={PAPER} /><text x="11" y="14" textAnchor="middle" fontSize="8" fill="#2f86c6" stroke="none">123</text><path d="M3-.5h5L5.500 4H8L0 12l2.500-6H.5z" fill="#ffb84d" stroke="#b8651b" /></> },
  { name: "Segmentação de dados (novo)", art: <><path d="M11.500 1.500h5v5h-5zM2.500 11.500h5v5h-5z" fill={PAPER} /><path d="M8.500 9.500H18l-3.500 4v4.500L12 17v-3.500z" fill={PAPER} /><path d="M3-.5h5L5.500 4H8L0 12l2.500-6H.5z" fill="#ffb84d" stroke="#b8651b" /></> },
  { name: "Mapa de formas", art: <><path d="M6.500 1.500h11v15h-15v-6l4-2z" fill={BLUE} stroke={EDGE} /><path d="m14 1.500-2 5-4 2-1 8" stroke="#fff" strokeWidth={2} /><path d="M.5.5h5v6l-2.500 3-2.500-3z" fill="#c8701e" stroke="#b8651b" /><circle cx="16" cy="16" r="2" fill="#c8701e" stroke="none" /><circle cx="14" cy="11" r="1.500" fill="#c8701e" stroke="none" /></> },
  { name: "Power Apps", art: <><path d="M6 2h6l6 7-6 7H6L0 9z" stroke="#8e3fa0" fill="#f7eaf9" /><path d="m6 2 3 3.500L12 2M6 16l3-3.500 3 3.500" stroke="#8e3fa0" /><path d="m9 5.500 3.500 3.500L9 12.500 5.500 9z" fill="#fff" stroke="#8e3fa0" /></> },
  { name: "Power Automate", art: <><path d="M1 1.500h10.500L17.500 9l-6 7.500H1L7 9z" fill="#dceefb" stroke="#2f7fc6" /><path d="M6.500 1.500 12 9 6 16.500M12 9 1 16.500" stroke="#2f7fc6" /></> },
];

function Toggle({ label, checked, onChange }: { label: string; checked: boolean; onChange: () => void }) {
  return (
    <label className="flex min-h-6 items-start gap-2.5 pr-5 pl-3 leading-4">
      <span className="w-[106px]">{label}</span>
      <span className="relative">
        <input
          type="checkbox"
          role="switch"
          checked={checked}
          onChange={onChange}
          className="block h-4 w-8 appearance-none rounded-full border border-[#605e5c] bg-white before:mt-[3px] before:ml-1 before:block before:size-2 before:rounded-full before:bg-[#605e5c] checked:border-[#117865] checked:bg-[#117865] checked:before:ml-[18px] checked:before:bg-white"
        />
        {checked && (
          <Check size={10} strokeWidth={4} className="pointer-events-none absolute top-[3px] left-1.5 text-white" />
        )}
      </span>
    </label>
  );
}

function DropWell({ text }: { text: string }) {
  return (
    <div className="mr-1.5 ml-1 flex h-[27px] items-center border border-dashed border-[#bebbb8] bg-white pl-2.5 whitespace-nowrap">
      {text}
    </div>
  );
}

function VisualizationsPane() {
  const [crossReport, setCrossReport] = useState(false);
  const [keepFilters, setKeepFilters] = useState(true);

  return (
    <aside className="flex w-[182px] shrink-0 flex-col border-r border-l border-[#d2d0ce] bg-[#f3f2f1] text-[11px]">
      <div className="flex h-[38px] items-center justify-between pr-2 pl-2">
        <h2 className="text-[15px] font-semibold">Visualizações</h2>
        <button type="button" aria-label="Recolher visualizações">
          <DoubleChevron />
        </button>
      </div>
      <h3 className="pl-2 leading-4 font-semibold">Criar visual</h3>
      <div className="relative flex h-12 gap-[34px] border-b border-[#797775] pt-[3px] pl-2">
        <button type="button" aria-label="Criar visual" className="flex size-8 items-center justify-center rounded-xs bg-[#d2d0ce]">
          <Icon size={26}>
            <path d="M1 2.500h19" stroke="#111" />
            <path d="M1.500 7.500h23v7h-23zM1.500 18.500h23v6h-23z" fill="#117865" stroke="#111" strokeDasharray="1.500 1.500" strokeWidth={1.500} />
          </Icon>
        </button>
        <button type="button" aria-label="Formatar visual" className="flex size-8 items-center justify-center">
          <Icon size={26}>
            <path d="M10 24.500H1.500v-23h10l6 6v3M11.500 1.500v6h6" strokeWidth={1.500} fill={PAPER} />
            <path d="m24.500 10-10 9 2 2.500zM14.500 19c-4 0-3 4-6 5 3 1.500 8 1 8-2.500z" fill={GREY} strokeWidth={1.400} />
          </Icon>
        </button>
        <svg width="18" height="9" viewBox="0 0 18 9" className="absolute -bottom-px left-[15px]" fill="#f3f2f1" stroke="#797775" aria-hidden="true">
          <path d="M0 8.500h1L9 .7l8 7.800h1" />
        </svg>
      </div>
      <div className="mt-1.5 grid w-[174px] grid-cols-6 pl-1.5">
        {visuals.map((visual) => (
          <button key={visual.name} type="button" aria-label={visual.name} className="flex size-7 items-center justify-center">
            {visual.letters ? (
              <span className="text-[15px] leading-6 font-bold text-[#2f7fae]">{visual.letters}</span>
            ) : (
              <Icon size={18}>{visual.art}</Icon>
            )}
          </button>
        ))}
        <button type="button" aria-label="Obter mais visuais" className="flex h-7 w-7 items-center justify-center pb-1">
          <svg width="16" height="3" viewBox="0 0 16 3" fill={INK} aria-hidden="true">
            <path d="M1 0h2v2H1zM7 0h2v2H7zM13 0h2v2h-2z" />
          </svg>
        </button>
      </div>
      <div className="mt-1 border-t border-[#d2d0ce] pt-2">
        <h3 className="mb-2 pl-3 leading-4">Valores</h3>
        <DropWell text="Adicionar os campos de da..." />
        <h3 className="mt-2.5 mb-[9px] pl-3 leading-4 font-semibold text-[#484644]">Drill-through</h3>
        <Toggle label="Relatório cruzado" checked={crossReport} onChange={() => setCrossReport(!crossReport)} />
        <div className="mt-[3px] mb-[9px]">
          <Toggle label="Manter todos os filtros" checked={keepFilters} onChange={() => setKeepFilters(!keepFilters)} />
        </div>
        <DropWell text="Adicionar os campos de dr..." />
      </div>
    </aside>
  );
}

function DataPane() {
  return (
    <aside className="flex w-[176px] shrink-0 flex-col bg-[#f3f2f1]">
      <div className="flex h-[38px] items-center justify-between pr-[3px] pl-2">
        <h2 className="text-[15px] font-semibold">Dados</h2>
        <button type="button" aria-label="Recolher dados">
          <DoubleChevron />
        </button>
      </div>
      <label className="mt-[7px] ml-1 flex h-6 items-center gap-1 rounded border border-[#d2d0ce] border-b-[#605e5c] bg-white pl-2.5">
        <Search size={18} strokeWidth={1.300} className="shrink-0 text-[#484644]" />
        <input
          type="search"
          aria-label="Pesquisar dados"
          placeholder="Pesquisar"
          className="w-full min-w-0 bg-transparent text-[12px] outline-none placeholder:text-[#605e5c]"
        />
      </label>
      <ul className="mt-[9px] pl-[15px] text-[11px]">
        {["Clientes", "Produtos", "Vendas"].map((table) => (
          <li key={table}>
            <button type="button" className="flex h-6 items-center">
              <svg width="8" height="13" viewBox="0 0 8 13" fill="none" stroke="#605e5c" strokeWidth="1.200" className="mr-1.5" aria-hidden="true">
                <path d="m1 .8 6 5.700-6 5.700" />
              </svg>
              <Icon size={13} className="mr-1.5">
                <rect x="1" y="1" width="11" height="11" rx="2" />
                <path d="M1 4.500h11M1 8.500h11M4.500 1v11M8.500 1v11" />
              </Icon>
              {table}
            </button>
          </li>
        ))}
      </ul>
    </aside>
  );
}

function StatusBar() {
  return (
    <footer className="flex h-[23px] shrink-0 items-center border-t border-[#d2d0ce] bg-[#f3f2f1] pt-0.5 pr-3.5 pl-1 text-[11px] text-[#484644]">
      <span>Página 1 de 1</span>
      <div className="ml-auto flex items-center">
        <button type="button" aria-label="Reduzir" className="mr-1">
          <Minus size={6} strokeWidth={5} />
        </button>
        <div className="relative flex h-3 w-[100px] items-center">
          <div className="h-px flex-1 bg-[#605e5c]" />
          <div className="absolute left-1/2 h-1.5 w-px bg-[#605e5c]" />
          <input
            type="range"
            aria-label="Zoom"
            defaultValue={26}
            className="absolute inset-0 w-full appearance-none bg-transparent [&::-webkit-slider-thumb]:h-3 [&::-webkit-slider-thumb]:w-1 [&::-webkit-slider-thumb]:appearance-none [&::-webkit-slider-thumb]:bg-[#484644]"
          />
        </div>
        <button type="button" aria-label="Ampliar" className="ml-1">
          <Plus size={11} strokeWidth={3} />
        </button>
        <span className="mr-[18px] ml-3">60%</span>
        <button type="button" aria-label="Ajustar à página">
          <svg width="17" height="13" viewBox="0 0 17 13" fill="none" stroke="#605e5c" strokeWidth="1.200" aria-hidden="true">
            <path d="M1 1h15v11H1zM3.500 5.500v-2h2M11.500 3.500h2v2M3.500 7.500v2h2M11.500 9.500h2v-2" />
          </svg>
        </button>
      </div>
    </footer>
  );
}

export default function App() {
  return (
    <div className="flex h-screen flex-col overflow-hidden bg-white font-['Open_Sans',sans-serif] text-[#252423]">
      <TitleBar />
      <Ribbon />
      <div className="flex min-h-0 flex-1">
        <Rail />
        <div className="flex min-w-0 flex-1 flex-col">
          <div className="flex min-h-0 flex-1">
            <ReportCanvas />
            <FiltersPane />
          </div>
          <PageTabs />
        </div>
        <VisualizationsPane />
        <DataPane />
      </div>
      <StatusBar />
    </div>
  );
}
